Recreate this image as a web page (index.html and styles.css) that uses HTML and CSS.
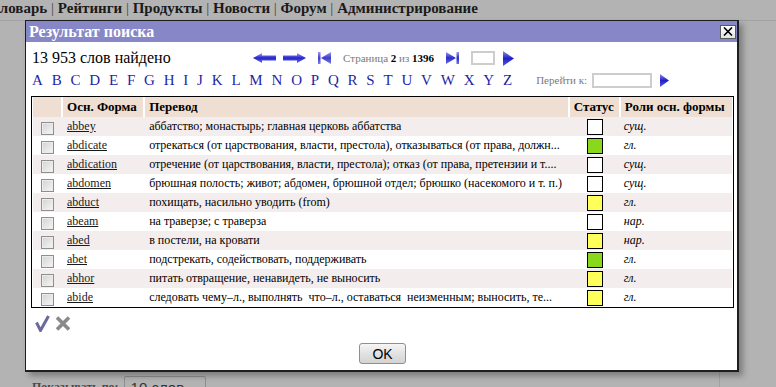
FILE: index.html
```html
<!DOCTYPE html>
<html lang="ru">
<head>
  <meta charset="UTF-8">
  <meta name="viewport" content="width=device-width, initial-scale=1.0">
  <title>Результат поиска</title>
  <link rel="stylesheet" href="styles.css">
</head>
<body>
  <div class="topnav">
    <span class="nav-items">Словарь <span class="sep">|</span> Рейтинги <span class="sep">|</span> Продукты <span class="sep">|</span> Новости <span class="sep">|</span> Форум <span class="sep">|</span> Администрирование</span>
  </div>

  <div class="page">
    <div class="main">
      <div class="pager">
        <span class="pager-label">Показывать по:</span>
        <span class="select">10 слов <span class="caret">&#9660;</span></span>
      </div>
    </div>
  </div>

  <div class="dialog">
    <div class="dialog-title">
      <span>Результат поиска</span>
      <span class="close">
        <svg width="10" height="9" viewBox="0 0 10 9"><path d="M1 0.5 L9 8.5 M9 0.5 L1 8.5" stroke="#000" stroke-width="1.6" fill="none"/></svg>
      </span>
    </div>

    <div class="dialog-body">
      <div class="toolbar">
        <div class="count">13 953 слов найдено</div>
        <div class="pages">
          <svg class="arrow" width="23" height="10" viewBox="0 0 23 10">
            <defs><linearGradient id="g1" x1="0" y1="0" x2="0" y2="1"><stop offset="0" stop-color="#a4a4f2"/><stop offset="0.5" stop-color="#2424cc"/><stop offset="1" stop-color="#6c6ce0"/></linearGradient></defs>
            <polygon points="0,5 9,0 9,2.5 23,2.5 23,7.5 9,7.5 9,10" fill="url(#g1)"/>
          </svg>
          <svg class="arrow arrow-next" width="23" height="10" viewBox="0 0 23 10">
            <defs><linearGradient id="g2" x1="0" y1="0" x2="0" y2="1"><stop offset="0" stop-color="#a4a4f2"/><stop offset="0.5" stop-color="#2424cc"/><stop offset="1" stop-color="#6c6ce0"/></linearGradient></defs>
            <polygon points="23,5 14,0 14,2.5 0,2.5 0,7.5 14,7.5 14,10" fill="url(#g2)"/>
          </svg>
          <svg class="edge" width="13" height="12" viewBox="0 0 13 12">
            <defs><linearGradient id="g3" x1="0" y1="0" x2="0" y2="1"><stop offset="0" stop-color="#9a9aea"/><stop offset="0.5" stop-color="#3c3cd0"/><stop offset="1" stop-color="#8080e2"/></linearGradient></defs>
            <rect x="0" y="0" width="2.5" height="12" fill="url(#g3)"/>
            <polygon points="3,6 13,0 13,12" fill="url(#g3)"/>
          </svg>
          <span class="page-info">Страница <b>2</b> из <b>1396</b></span>
          <svg class="edge" width="13" height="12" viewBox="0 0 13 12">
            <defs><linearGradient id="g4" x1="0" y1="0" x2="0" y2="1"><stop offset="0" stop-color="#9a9aea"/><stop offset="0.5" stop-color="#2a2acc"/><stop offset="1" stop-color="#7070e0"/></linearGradient></defs>
            <polygon points="0,0 10,6 0,12" fill="url(#g4)"/>
            <rect x="10.5" y="0" width="2.5" height="12" fill="url(#g4)"/>
          </svg>
          <span class="page-input"></span>
          <svg class="play" width="11" height="15" viewBox="0 0 11 15">
            <defs><linearGradient id="g5" x1="0" y1="0" x2="0" y2="1"><stop offset="0" stop-color="#8c8cec"/><stop offset="0.5" stop-color="#2020c8"/><stop offset="1" stop-color="#5a5adc"/></linearGradient></defs>
            <polygon points="0,0 11,7.5 0,15" fill="url(#g5)"/>
          </svg>
        </div>
      </div>

      <div class="alphabet">
        <div class="letters">
          <a href="#">A</a><a href="#">B</a><a href="#">C</a><a href="#">D</a><a href="#">E</a><a href="#">F</a><a href="#">G</a><a href="#">H</a><a href="#">I</a><a href="#">J</a><a href="#">K</a><a href="#">L</a><a href="#">M</a><a href="#">N</a><a href="#">O</a><a href="#">P</a><a href="#">Q</a><a href="#">R</a><a href="#">S</a><a href="#">T</a><a href="#">U</a><a href="#">V</a><a href="#">W</a><a href="#">X</a><a href="#">Y</a><a href="#">Z</a>
        </div>
        <span class="goto-label">Перейти к:</span>
        <span class="goto-input"></span>
        <svg class="play" width="9" height="13" viewBox="0 0 9 13">
          <defs><linearGradient id="g6" x1="0" y1="0" x2="0" y2="1"><stop offset="0" stop-color="#8c8cec"/><stop offset="0.5" stop-color="#2020c8"/><stop offset="1" stop-color="#5a5adc"/></linearGradient></defs>
          <polygon points="0,0 9,6.5 0,13" fill="url(#g6)"/>
        </svg>
      </div>

      <div class="grid">
        <table>
          <colgroup>
            <col class="c-check"><col class="c-word"><col class="c-trans"><col class="c-status"><col class="c-role">
          </colgroup>
          <thead>
            <tr><th></th><th>Осн. Форма</th><th>Перевод</th><th>Статус</th><th>Роли осн. формы</th></tr>
          </thead>
          <tbody>
            <tr><td class="cb"><input type="checkbox" class="check"></td><td><a href="#">abbey</a></td><td>аббатство; монастырь; главная церковь аббатства</td><td><span class="status"></span></td><td class="role">сущ.</td></tr>
            <tr><td class="cb"><input type="checkbox" class="check"></td><td><a href="#">abdicate</a></td><td>отрекаться (от царствования, власти, престола), отказываться (от права, должн...</td><td><span class="status green"></span></td><td class="role">гл.</td></tr>
            <tr><td class="cb"><input type="checkbox" class="check"></td><td><a href="#">abdication</a></td><td>отречение (от царствования, власти, престола); отказ (от права, претензии и т....</td><td><span class="status"></span></td><td class="role">сущ.</td></tr>
            <tr><td class="cb"><input type="checkbox" class="check"></td><td><a href="#">abdomen</a></td><td>брюшная полость; живот; абдомен, брюшной отдел; брюшко (насекомого и т. п.)</td><td><span class="status"></span></td><td class="role">сущ.</td></tr>
            <tr><td class="cb"><input type="checkbox" class="check"></td><td><a href="#">abduct</a></td><td>похищать, насильно уводить (from)</td><td><span class="status yellow"></span></td><td class="role">гл.</td></tr>
            <tr><td class="cb"><input type="checkbox" class="check"></td><td><a href="#">abeam</a></td><td>на траверзе; с траверза</td><td><span class="status"></span></td><td class="role">нар.</td></tr>
            <tr><td class="cb"><input type="checkbox" class="check"></td><td><a href="#">abed</a></td><td>в постели, на кровати</td><td><span class="status yellow"></span></td><td class="role">нар.</td></tr>
            <tr><td class="cb"><input type="checkbox" class="check"></td><td><a href="#">abet</a></td><td>подстрекать, содействовать, поддерживать</td><td><span class="status green"></span></td><td class="role">гл.</td></tr>
            <tr><td class="cb"><input type="checkbox" class="check"></td><td><a href="#">abhor</a></td><td>питать отвращение, ненавидеть, не выносить</td><td><span class="status yellow"></span></td><td class="role">гл.</td></tr>
            <tr><td class="cb"><input type="checkbox" class="check"></td><td><a href="#">abide</a></td><td>следовать чему–л., выполнять&nbsp; что–л., оставаться&nbsp; неизменным; выносить, те...</td><td><span class="status yellow"></span></td><td class="role">гл.</td></tr>
          </tbody>
        </table>
      </div>

      <div class="actions">
        <svg width="15" height="17" viewBox="0 0 15 17"><path d="M1.5 7.5 L5.5 15.5 L13.5 1" stroke="#6a6a9e" stroke-width="3" fill="none" stroke-linejoin="miter"/></svg>
        <svg width="16" height="15" viewBox="0 0 16 15"><path d="M2 1.5 L14 13.5 M14 1.5 L2 13.5" stroke="#8a8a8a" stroke-width="3.6" fill="none"/></svg>
      </div>

      <div class="footer">
        <button class="ok">OK</button>
      </div>
    </div>
  </div>
</body>
</html>
```

FILE: styles.css
```css
body {
  margin: 0;
  background-color: #b3b3b3;
  font-family: "Liberation Serif", "Times New Roman", serif;
  color: #000;
  overflow: hidden;
}

.topnav {
  box-sizing: border-box;
  height: 21px;
  border-bottom: 1px solid #a2a2a2;
  font-size: 15px;
  font-weight: bold;
  line-height: 16px;
  color: #1a1a1a;
  white-space: nowrap;
  text-indent: -11px;
}

.sep {
  font-weight: normal;
  color: #444;
}

.page {
  display: flex;
}

.main {
  width: 720px;
  height: 366px;
  border-right: 1px solid #a2a2a2;
  box-sizing: border-box;
}

.pager {
  display: flex;
  align-items: flex-start;
  gap: 5px;
  margin-top: 355px;
  padding-left: 32px;
}

.pager-label {
  font-size: 12px;
  font-weight: bold;
  line-height: 14px;
  color: #4a4a4a;
  padding-top: 4px;
}

.select {
  box-sizing: border-box;
  width: 82px;
  height: 24px;
  border: 1px solid #8e8e8e;
  border-radius: 2px;
  padding: 2px 6px;
  font-family: "Liberation Sans", Arial, sans-serif;
  font-size: 15px;
  color: #333;
  display: flex;
  justify-content: space-between;
}

.caret {
  font-size: 9px;
  padding-top: 6px;
}

/* dialog over the page */
.dialog {
  position: absolute;
  left: 25px;
  top: 20px;
  box-sizing: border-box;
  width: 714px;
  background-color: #fff;
  border: 1px solid #1e1e1e;
  border-right-width: 2px;
  border-bottom-width: 2px;
  box-shadow: 4px 4px 6px rgba(0, 0, 0, 0.3);
}

.dialog-title {
  height: 21px;
  background-color: #8787c7;
  color: #fff;
  font-size: 16px;
  font-weight: bold;
  line-height: 21px;
  padding-left: 3px;
  display: flex;
  justify-content: space-between;
  align-items: center;
}

.close {
  box-sizing: border-box;
  width: 16px;
  height: 14px;
  margin-right: 1px;
  background: linear-gradient(#ffffff, #e4e4e4);
  border: 1px solid #5a5a5a;
  display: flex;
  align-items: center;
  justify-content: center;
}

.dialog-body {
  padding: 4px 3px 6px 5px;
}

.toolbar {
  height: 24px;
  display: flex;
  align-items: center;
}

.count {
  width: 221px;
  padding-left: 1px;
  font-size: 16px;
}

.pages {
  display: flex;
  align-items: center;
}

.arrow-next {
  margin-left: 7px;
}

.edge {
  margin-left: 12px;
}

.page-info {
  margin-left: 12px;
  font-size: 11px;
  color: #7a7a7a;
}

.page-info b {
  color: #000;
}

.page-input {
  box-sizing: border-box;
  width: 24px;
  height: 14px;
  margin-left: 12px;
  border: 2px solid #cdcdcd;
}

.play {
  margin-left: 8px;
}

.alphabet {
  height: 20px;
  display: flex;
  align-items: center;
  margin-bottom: 6px;
}

.letters {
  display: flex;
  gap: 8.8px;
  padding-left: 1px;
  font-size: 15px;
}

.letters a {
  color: #1f1fa6;
  text-decoration: none;
}

.goto-label {
  margin-left: 24px;
  font-size: 11px;
  color: #7a7a7a;
}

.goto-input {
  box-sizing: border-box;
  width: 60px;
  height: 15px;
  margin-left: 5px;
  border: 2px solid #cdcdcd;
}

/* results table */
.grid {
  border: 1px solid #000;
  padding: 0 1px;
}

.grid table {
  width: 100%;
  table-layout: fixed;
  border-collapse: separate;
  border-spacing: 0;
}

.c-check { width: 28px; }
.c-word { width: 82px; }
.c-trans { width: 424px; }
.c-status { width: 51px; }
.c-role { width: 113px; }

th {
  height: 20px;
  padding: 0 0 0 4px;
  background-color: #efdfd2;
  font-size: 13px;
  font-weight: bold;
  text-align: left;
  white-space: nowrap;
}

th + th {
  border-left: 2px solid #fff;
}

td {
  height: 19px;
  padding: 0 0 0 6px;
  font-size: 12px;
  white-space: nowrap;
  overflow: hidden;
}

tbody tr:nth-child(odd) td {
  background-color: #f3eded;
}

td.cb {
  padding: 0;
  text-align: center;
}

.check {
  appearance: none;
  -webkit-appearance: none;
  box-sizing: border-box;
  width: 13px;
  height: 13px;
  margin: 3px 0 0;
  border: 1px solid #8f8f8f;
  background: linear-gradient(135deg, #d2d2d2, #f6f6f6);
  box-shadow: inset 0 0 0 1px #ececec;
  vertical-align: top;
}

td a {
  color: #1a1a1a;
  text-decoration: underline;
}

.status {
  display: block;
  box-sizing: border-box;
  width: 16px;
  height: 16px;
  margin-left: 13px;
  border: 1px solid #000;
  background-color: #fff;
}

.status.green {
  background-color: #8ad81c;
}

.status.yellow {
  background-color: #ffff5c;
}

td.role {
  padding-left: 5px;
  font-style: italic;
}

.actions {
  height: 24px;
  margin-top: 3px;
  display: flex;
  align-items: center;
  gap: 5px;
  padding-left: 4px;
}

.footer {
  display: flex;
  justify-content: center;
  margin-top: 8px;
}

.ok {
  box-sizing: border-box;
  width: 47px;
  height: 21px;
  border: 1px solid #8e8f8f;
  border-radius: 3px;
  background: linear-gradient(#f6f6f6, #e2e2e2 50%, #d4d4d4);
  font-family: "Liberation Sans", Arial, sans-serif;
  font-size: 14px;
  color: #000;
  padding: 0;
}
```
